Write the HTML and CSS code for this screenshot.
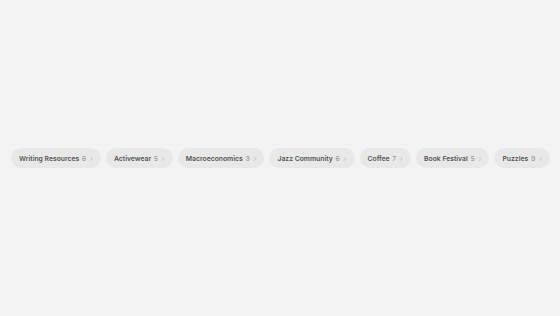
FILE: index.html
```html
<!DOCTYPE html>
<html>
<head>
<meta charset="utf-8">
<link rel="stylesheet" href="styles.css">
</head>
<body>
<main class="page">
  <nav class="tags">
    <a class="tag">Writing Resources <span class="count">6</span><span class="chev">›</span></a>
    <a class="tag">Activewear <span class="count">5</span><span class="chev">›</span></a>
    <a class="tag">Macroeconomics <span class="count">3</span><span class="chev">›</span></a>
    <a class="tag">Jazz Community <span class="count">6</span><span class="chev">›</span></a>
    <a class="tag">Coffee <span class="count">7</span><span class="chev">›</span></a>
    <a class="tag">Book Festival <span class="count">5</span><span class="chev">›</span></a>
    <a class="tag">Puzzles <span class="count">9</span><span class="chev">›</span></a>
  </nav>
</main>
</body>
</html>
```
FILE: styles.css
```css
html, body {
  margin: 0;
  padding: 0;
  background: #f3f3f3;
}
.page {
  height: 316px;
  display: flex;
  align-items: center;
  padding: 0 11px;
  box-sizing: border-box;
  font-family: Inter, "Liberation Sans", sans-serif;
}
.tags {
  display: flex;
  gap: 5px;
}
.tag {
  display: flex;
  align-items: center;
  height: 20px;
  padding: 0 8px;
  border-radius: 10px;
  background: #e8e8e8;
  color: #555555;
  font-size: 6.8px;
  font-weight: 600;
  letter-spacing: 0;
  white-space: pre;
}
.count {
  color: #999999;
  font-weight: 500;
  margin-left: 1px;
}
.chev {
  color: #cccccc;
  margin-left: 3.5px;
  font-size: 8px;
}
```
